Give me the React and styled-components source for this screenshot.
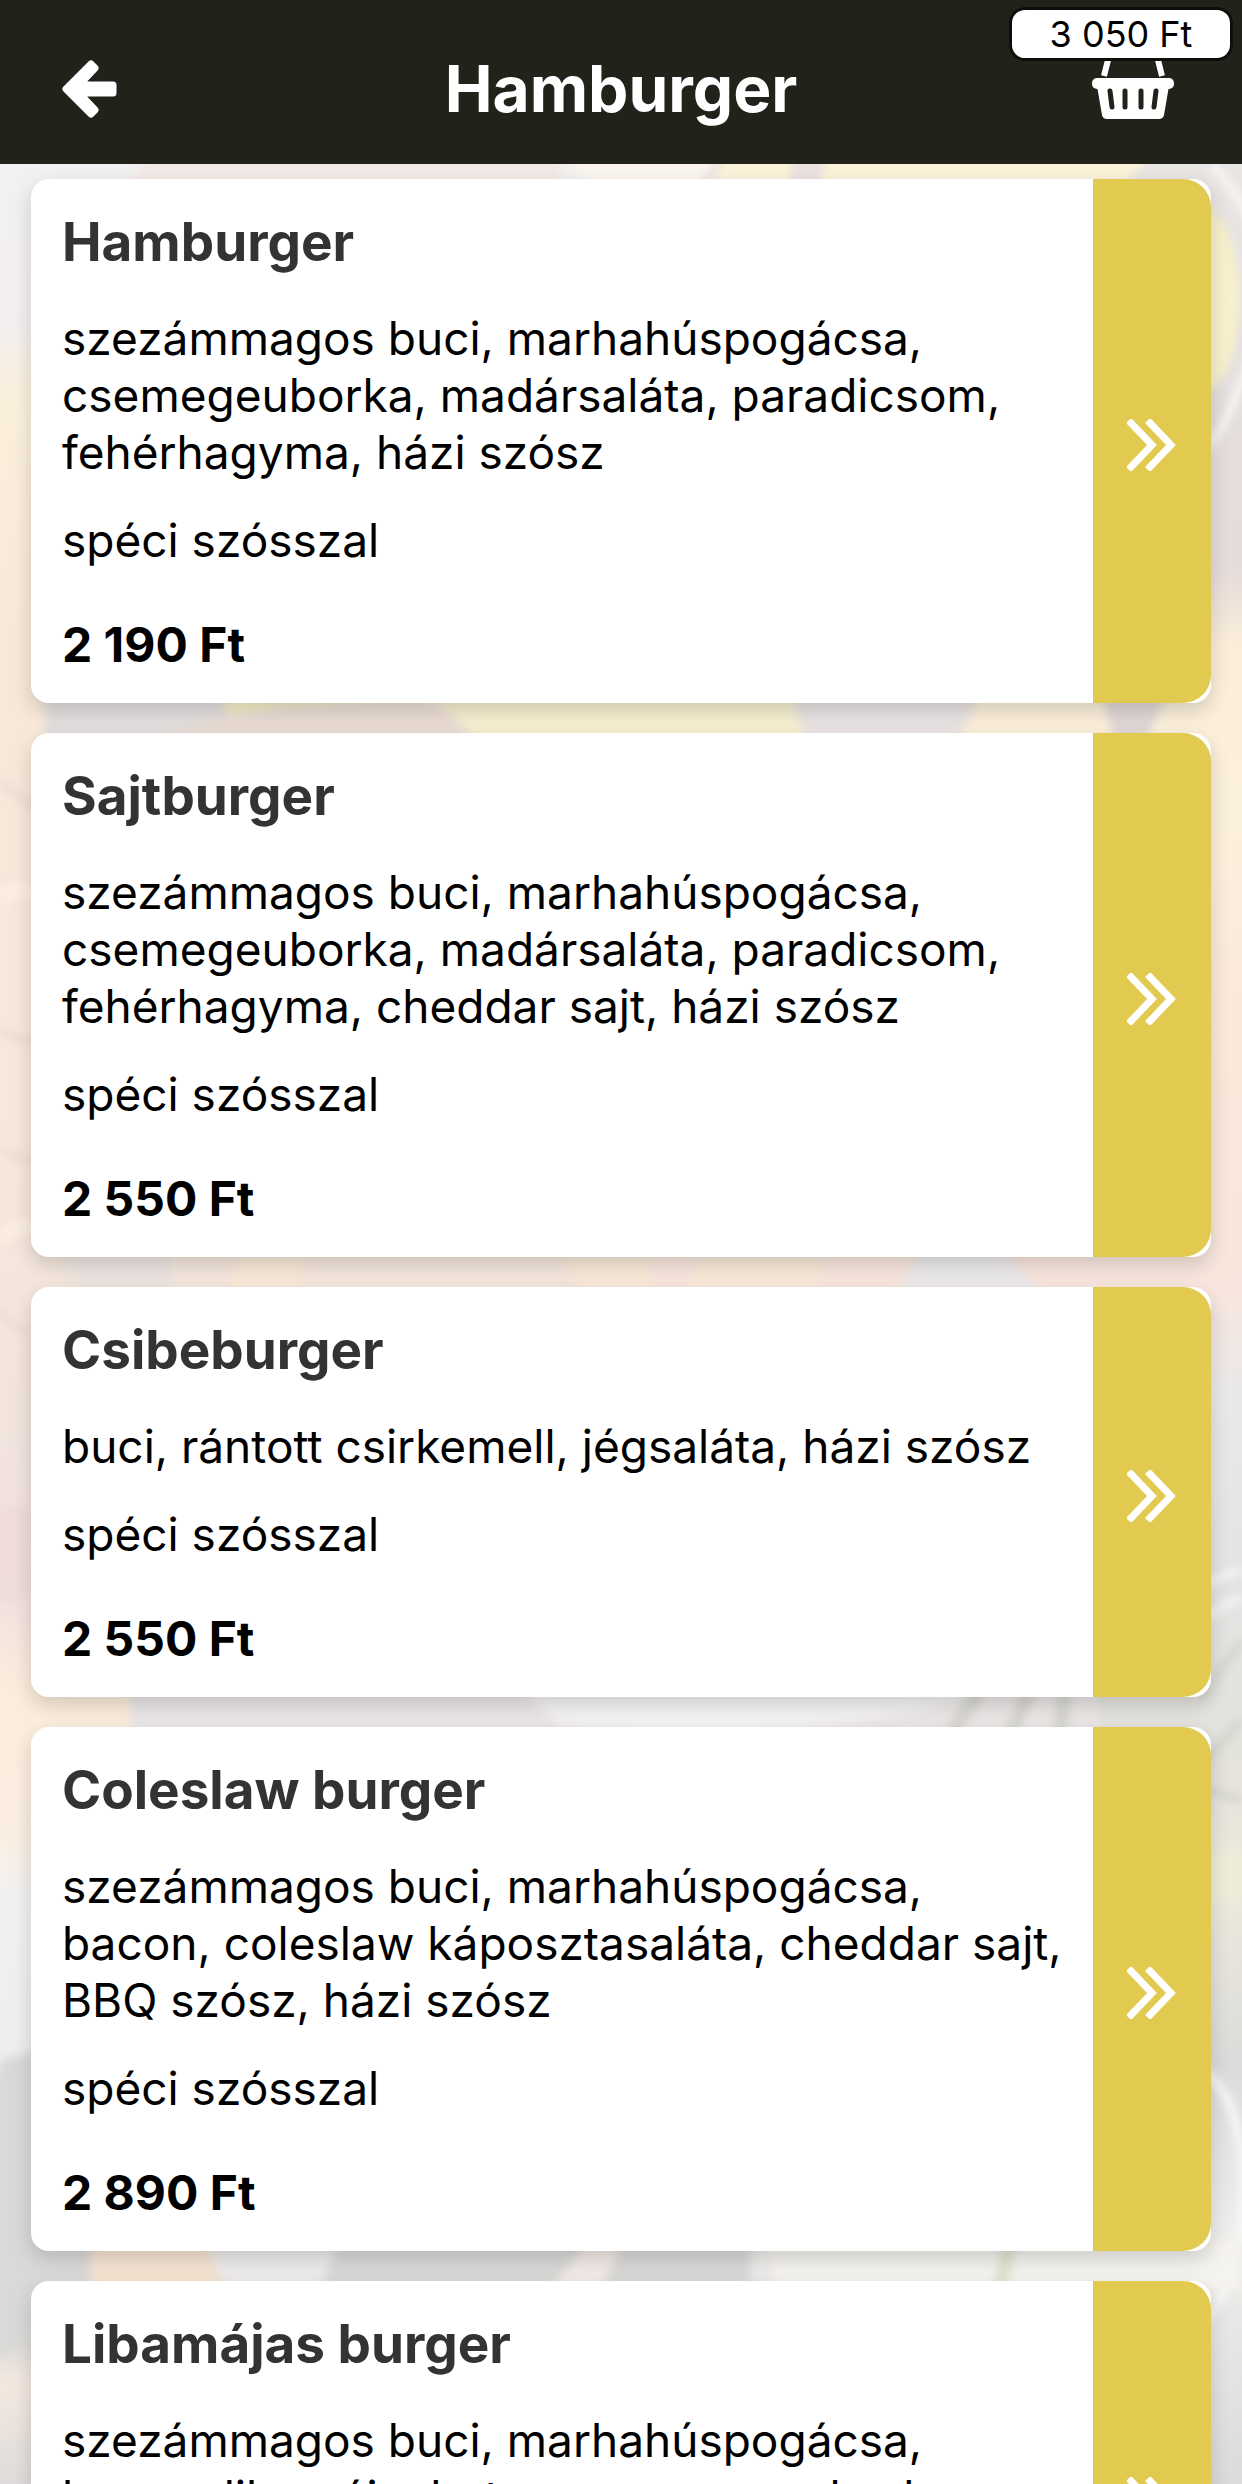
import React, { PureComponent } from 'react';
import styled, { createGlobalStyle } from 'styled-components';

const GlobalStyle = createGlobalStyle`
  * {
    box-sizing: border-box;
  }

  body {
    margin: 0;
    font-family: Inter, 'Liberation Sans', sans-serif;
    color: #000;
  }
`;

// Styled Components
const Page = styled.div`
  display: flex;
  flex-direction: column;
  height: 100vh;
  position: relative;
  overflow: hidden;
`;

const TopBar = styled.header`
  display: grid;
  grid-template-columns: 1fr auto 1fr;
  align-items: end;
  height: 164px;
  padding: 0 60px 44px;
  flex-shrink: 0;
  background: #21231b;
  color: #fff;
`;

const PageTitle = styled.h1`
  margin: 0;
  font-size: 64px;
  line-height: 62px;
  font-weight: 700;
`;

const IconButton = styled.button`
  display: flex;
  justify-self: start;
  padding: 0;
  border: 0;
  background: none;
  color: inherit;
  font-family: inherit;
  cursor: pointer;
`;

const CartButton = styled(IconButton)`
  justify-self: end;
  position: relative;
  margin-right: 7px;
`;

const CartTotal = styled.span`
  position: absolute;
  right: -58px;
  bottom: 59px;
  width: 224px;
  padding: 4px 0;
  border: 3px solid #0e0f0b;
  border-radius: 16px;
  background: #fff;
  color: #000;
  font-size: 36px;
  line-height: 40px;
  text-align: center;
`;

const Backdrop = styled.svg`
  position: absolute;
  top: 0;
  left: 0;
  z-index: -1;
  width: 100%;
  height: 100%;
`;

const MenuList = styled.main`
  display: flex;
  flex: 1;
  flex-direction: column;
  gap: 30px;
  min-height: 0;
  padding: 15px 31px 30px;
  overflow: hidden;
`;

const Card = styled.article`
  display: flex;
  flex-shrink: 0;
  border-radius: 18px;
  background: #fff;
  box-shadow: 0 8px 20px rgba(0, 0, 0, 0.16);
`;

const CardBody = styled.div`
  flex: 1;
  padding: 32px 31px 30px;
`;

const ItemName = styled.h2`
  margin: 0 0 37px;
  color: #333;
  font-size: 53px;
  line-height: 62px;
  font-weight: 700;
`;

const Text = styled.p`
  margin: 0 0 31px;
  font-size: 46px;
  line-height: 57px;
`;

const Price = styled.p`
  margin: 47px 0 0;
  font-size: 48px;
  line-height: 57px;
  font-weight: 700;
`;

const OpenButton = styled.button`
  display: flex;
  align-items: center;
  justify-content: center;
  width: 118px;
  padding: 8px 0 0;
  border: 0;
  border-radius: 0 28px 28px 0;
  background: #e2ca50;
  color: #fff;
  cursor: pointer;
`;
// End of Styled Components

const items = [
  {
    name: 'Hamburger',
    description: 'szezámmagos buci, marhahúspogácsa, csemegeuborka, madársaláta, paradicsom, fehérhagyma, házi szósz',
    note: 'spéci szósszal',
    price: '2 190 Ft',
  },
  {
    name: 'Sajtburger',
    description: 'szezámmagos buci, marhahúspogácsa, csemegeuborka, madársaláta, paradicsom, fehérhagyma, cheddar sajt, házi szósz',
    note: 'spéci szósszal',
    price: '2 550 Ft',
  },
  {
    name: 'Csibeburger',
    description: 'buci, rántott csirkemell, jégsaláta, házi szósz',
    note: 'spéci szósszal',
    price: '2 550 Ft',
  },
  {
    name: 'Coleslaw burger',
    description: 'szezámmagos buci, marhahúspogácsa, bacon, coleslaw káposztasaláta, cheddar sajt, BBQ szósz, házi szósz',
    note: 'spéci szósszal',
    price: '2 890 Ft',
  },
  {
    name: 'Libamájas burger',
    description: 'szezámmagos buci, marhahúspogácsa, bacon, libamáj, chutney, csemegeuborka, házi szósz',
    price: '3 490 Ft',
  },
];

const BackIcon = () => (
  <svg width="58" height="60" viewBox="0 0 58 60" aria-hidden="true">
    <path
      d="M31 4 L35 8 L19 25 H53 V33 H19 L35 50 L31 54 L6 29 Z"
      fill="currentColor"
      stroke="currentColor"
      strokeWidth="7"
      strokeLinejoin="round"
    />
  </svg>
);

const BasketIcon = () => (
  <svg width="84" height="84" viewBox="0 0 84 84" aria-hidden="true">
    <path d="M13 40 L21 8 H63 L71 40" fill="none" stroke="currentColor" strokeWidth="6" />
    <rect x="1" y="42" width="82" height="11" rx="5" fill="currentColor" />
    <path d="M6 50 H78 L73 79 Q72 83 68 83 H16 Q12 83 11 79 Z" fill="currentColor" />
    <path
      d="M19 55 L21 71 M34 55 V71 M50 55 V71 M65 55 L63 71"
      stroke="#21231b"
      strokeWidth="5"
      strokeLinecap="round"
    />
  </svg>
);

const DoubleChevron = () => (
  <svg width="50" height="52" viewBox="0 0 50 52" aria-hidden="true">
    <path
      d="M4 4 L25 26 L4 48 M23 4 L44 26 L23 48"
      fill="none"
      stroke="currentColor"
      strokeWidth="7"
      strokeLinecap="square"
    />
  </svg>
);

// Washed-out food photo behind the list
const FoodBackdrop = () => (
  <Backdrop viewBox="0 0 1242 2484" preserveAspectRatio="xMidYMid slice" aria-hidden="true">
    <defs>
      <linearGradient id="leftTone" x1="0" y1="0" x2="0" y2="1">
        <stop offset="0.060" stopColor="#f3f1f0" />
        <stop offset="0.130" stopColor="#f3eff0" />
        <stop offset="0.160" stopColor="#fbf0dc" />
        <stop offset="0.260" stopColor="#f8e8d9" />
        <stop offset="0.450" stopColor="#f7e8dc" />
        <stop offset="0.570" stopColor="#f2e4dd" />
        <stop offset="0.640" stopColor="#f0e0e0" />
        <stop offset="0.680" stopColor="#fbeddc" />
        <stop offset="0.740" stopColor="#fbefe2" />
        <stop offset="0.760" stopColor="#f3f1f0" />
        <stop offset="0.830" stopColor="#efeeed" />
        <stop offset="0.840" stopColor="#d9d9d8" />
        <stop offset="0.940" stopColor="#dadad9" />
        <stop offset="0.960" stopColor="#f3e8e0" />
        <stop offset="1" stopColor="#dedcdb" />
      </linearGradient>
      <linearGradient id="rightTone" x1="0" y1="0" x2="0" y2="1">
        <stop offset="0.060" stopColor="#e9e6e4" />
        <stop offset="0.170" stopColor="#e4dedd" />
        <stop offset="0.230" stopColor="#e6dcda" />
        <stop offset="0.260" stopColor="#fbeed9" />
        <stop offset="0.330" stopColor="#fcf1dd" />
        <stop offset="0.400" stopColor="#fbe9da" />
        <stop offset="0.520" stopColor="#f8e6de" />
        <stop offset="0.560" stopColor="#eae8e9" />
        <stop offset="0.630" stopColor="#e5e4e4" />
        <stop offset="0.700" stopColor="#e3e2dc" />
        <stop offset="0.760" stopColor="#eceadc" />
        <stop offset="0.830" stopColor="#dcdbda" />
        <stop offset="0.900" stopColor="#efeeec" />
        <stop offset="1" stopColor="#dddbda" />
      </linearGradient>
      <filter id="soft" x="-20%" y="-20%" width="140%" height="140%">
        <feGaussianBlur stdDeviation="4" />
      </filter>
    </defs>
    <rect width="1242" height="2484" fill="url(#leftTone)" />
    <rect x="620" width="622" height="2484" fill="url(#rightTone)" />
    <g filter="url(#soft)">
      {/* top edge */}
      <path d="M150 150 H560 V185 H130 Z" fill="#f3e9e6" />
      <path d="M560 150 H720 L700 185 H590 Z" fill="#fbf5ef" />
      <path d="M730 150 H1160 L1120 185 H710 Z" fill="#fdf3da" />
      <path d="M790 150 H830 L820 185 H790 Z" fill="#ebe2e0" />
      <ellipse cx="1205" cy="300" rx="34" ry="90" fill="#f8f1cb" />
      <path d="M1212 164 Q1300 260 1242 380 Q1225 430 1205 450" fill="none" stroke="#faf8f7" strokeWidth="7" />
      {/* under the first card */}
      <path d="M45 690 H260 V740 H45 Z" fill="#e2dfde" />
      <path d="M215 690 H450 L400 715 L230 718 Z" fill="#f6efc8" />
      <path d="M160 740 Q230 700 420 700 Q460 715 475 740 Z" fill="#eadcd4" />
      <path d="M430 690 H790 L805 740 H475 Z" fill="#f6efd0" />
      <path d="M790 690 H980 L960 740 H805 Z" fill="#e9e4e3" />
      <path d="M1100 690 H1170 L1145 740 H1115 Z" fill="#e0d7d6" />
      {/* fries on the left */}
      <path d="M0 780 Q18 800 40 810 M0 1030 Q18 1040 40 1044 M0 1150 L40 1165 M0 1310 Q14 1330 30 1334" fill="none" stroke="#e8d9d0" strokeWidth="5" />
      <path d="M0 900 Q20 880 40 900 M0 1240 Q20 1220 40 1230" fill="none" stroke="#fbefe1" strokeWidth="14" />
      <path d="M0 1510 Q30 1500 40 1520 Q20 1560 40 1580 Q20 1610 0 1600 Z" fill="#efdcdb" />
      {/* under the second card */}
      <path d="M60 1250 H170 V1290 H80 Z" fill="#ece4e0" />
      <path d="M240 1250 H300 V1290 H230 Z M560 1250 H650 V1290 H580 Z M700 1250 H820 V1290 H690 Z" fill="#f9e9d8" />
      <path d="M920 1250 H1000 L1040 1290 H900 Z" fill="#ece9ea" />
      {/* under the third card */}
      <path d="M130 1690 H1100 V1735 H130 Z" fill="#eae6e5" />
      <path d="M520 1690 H1000 Q800 1750 560 1725 Z" fill="#f4f2f2" />
      <path d="M980 1690 L950 1735 M1030 1690 L1010 1735 M1065 1690 L1060 1735" stroke="#d6d5d2" strokeWidth="14" />
      {/* salad and plates on the right */}
      <path d="M1195 1590 Q1220 1575 1242 1570 M1205 1620 Q1225 1600 1242 1600" fill="none" stroke="#f8f8f7" strokeWidth="6" />
      <path d="M1242 1640 L1200 1700 M1242 1720 L1205 1760 M1242 1800 L1205 1790" stroke="#d5d5cf" strokeWidth="8" />
      <path d="M1242 1850 H1215 V1900 H1242 Z" fill="#eeedd8" />
      <path d="M1190 2060 Q1260 2100 1238 2250 Q1225 2310 1190 2330" fill="none" stroke="#faf9f8" strokeWidth="8" />
      {/* under the fourth card */}
      <path d="M0 2060 L40 2050 V2290 Q20 2350 0 2360 Z" fill="#d9d9d8" />
      <path d="M90 2240 H205 L225 2290 H90 Z" fill="#f5e4d2" />
      <path d="M205 2240 H340 L320 2290 H225 Z" fill="#edebeb" />
      <path d="M340 2240 H590 L550 2290 H320 Z M620 2240 H750 V2290 H590 Z" fill="#d9d9d8" />
      <path d="M590 2240 H625 L600 2290 H550 Z" fill="#f2eae6" />
      <path d="M765 2240 H1242 V2290 H775 Z" fill="#f5f3ef" />
      <path d="M1010 2240 L1000 2290" stroke="#dfe3cf" strokeWidth="14" />
    </g>
  </Backdrop>
);

class MenuItem extends PureComponent {
  render() {
    const { name, description, note, price } = this.props;

    return (
      <Card>
        <CardBody>
          <ItemName>{name}</ItemName>
          <Text>{description}</Text>
          {note && <Text>{note}</Text>}
          <Price>{price}</Price>
        </CardBody>
        <OpenButton type="button" aria-label={name}>
          <DoubleChevron />
        </OpenButton>
      </Card>
    );
  }
}

const App = () => (
  <Page>
    <GlobalStyle />
    <FoodBackdrop />
    <TopBar>
      <IconButton type="button" aria-label="Vissza">
        <BackIcon />
      </IconButton>
      <PageTitle>Hamburger</PageTitle>
      <CartButton type="button">
        <BasketIcon />
        <CartTotal>3 050 Ft</CartTotal>
      </CartButton>
    </TopBar>
    <MenuList>
      {items.map(item => (
        <MenuItem key={item.name} {...item} />
      ))}
    </MenuList>
  </Page>
);

export default App;
